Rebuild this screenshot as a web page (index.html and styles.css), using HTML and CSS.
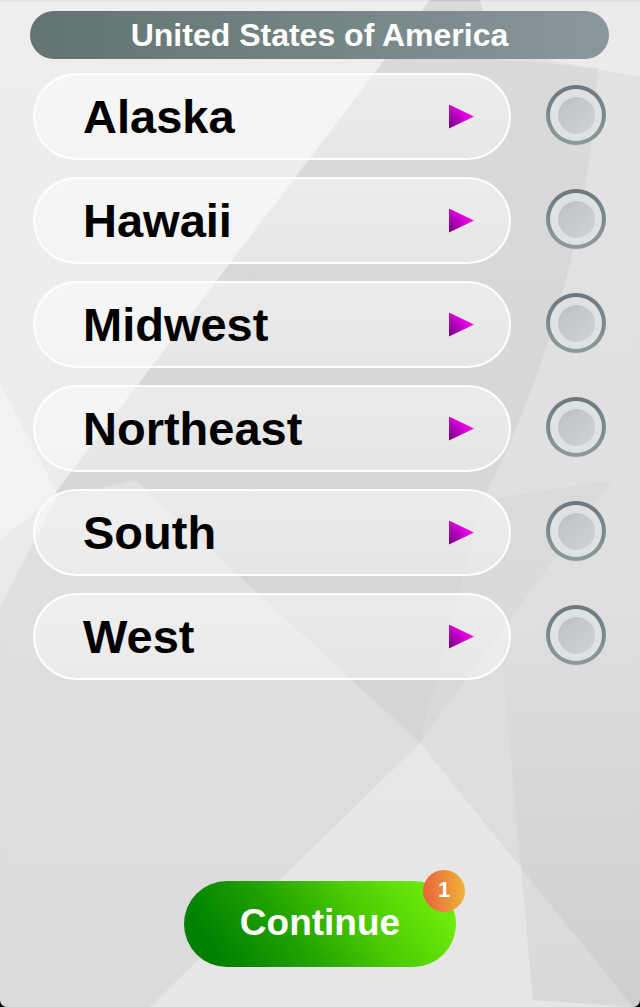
FILE: index.html
```html
<!DOCTYPE html>
<html>
<head>
<meta charset="utf-8">
<title>United States of America</title>
<link rel="stylesheet" href="styles.css">
</head>
<body>
<div class="screen">
  <svg class="backdrop" viewBox="0 0 640 1007" preserveAspectRatio="none" aria-hidden="true">
    <defs>
      <linearGradient id="shade" x1="0" y1="0" x2="0" y2="1">
        <stop offset="0" stop-color="#000" stop-opacity="0"/>
        <stop offset="1" stop-color="#000" stop-opacity="0.06"/>
      </linearGradient>
    </defs>
    <polygon points="0,0 430,0 50,500 0,540" fill="#ffffff" fill-opacity="0.4"/>
    <path d="M480,0 L640,0 L640,77 Q580,64 500,60 Z" fill="#ffffff" fill-opacity="0.3"/>
    <path d="M430,0 L480,0 Q490,58 598,68 Q585,300 483,500 L420,743 L135,480 L50,500 Z" fill="#000000" fill-opacity="0.04"/>
    <polygon points="483,500 612,480 420,743" fill="#000000" fill-opacity="0.02"/>
    <polygon points="0,383 58,495 0,607" fill="#ffffff" fill-opacity="0.35"/>
    <polygon points="420,743 633,1007 150,1007" fill="#ffffff" fill-opacity="0.3"/>
    <polygon points="500,640 640,600 640,1007 633,1007 533,1000" fill="url(#shade)"/>
  </svg>
  <div class="content">
    <div class="title">United States of America</div>
    <ul class="regions">
      <li class="region">
        <div class="pill"><span class="name">Alaska</span><span class="arrow"></span></div>
        <span class="radio"><span class="radio-well"><span class="dot"></span></span></span>
      </li>
      <li class="region">
        <div class="pill"><span class="name">Hawaii</span><span class="arrow"></span></div>
        <span class="radio"><span class="radio-well"><span class="dot"></span></span></span>
      </li>
      <li class="region">
        <div class="pill"><span class="name">Midwest</span><span class="arrow"></span></div>
        <span class="radio"><span class="radio-well"><span class="dot"></span></span></span>
      </li>
      <li class="region">
        <div class="pill"><span class="name">Northeast</span><span class="arrow"></span></div>
        <span class="radio"><span class="radio-well"><span class="dot"></span></span></span>
      </li>
      <li class="region">
        <div class="pill"><span class="name">South</span><span class="arrow"></span></div>
        <span class="radio"><span class="radio-well"><span class="dot"></span></span></span>
      </li>
      <li class="region">
        <div class="pill"><span class="name">West</span><span class="arrow"></span></div>
        <span class="radio"><span class="radio-well"><span class="dot"></span></span></span>
      </li>
    </ul>
    <div class="footer">
      <button class="continue">Continue<span class="badge">1</span></button>
    </div>
  </div>
</div>
</body>
</html>
```

FILE: styles.css
```css
html, body {
  margin: 0;
  padding: 0;
  background: #000;
}

.screen {
  position: relative;
  width: 640px;
  height: 1007px;
  overflow: hidden;
  border-radius: 0 0 7px 7px;
  background: linear-gradient(180deg, #e3e3e3 0%, #dfdfdf 60%, #dbdbdb 100%);
  box-shadow: inset 0 2px 2px -1px rgba(0, 0, 0, 0.12);
  font-family: "Liberation Sans", Arial, Helvetica, sans-serif;
}

.backdrop {
  position: absolute;
  inset: 0;
  width: 100%;
  height: 100%;
  z-index: 0;
}

.content {
  position: relative;
  z-index: 1;
  display: flex;
  flex-direction: column;
  height: 100%;
  box-sizing: border-box;
  padding-top: 11px;
}

.title {
  margin: 0 31px 0 30px;
  height: 48px;
  border-radius: 24px;
  background: linear-gradient(90deg, #627371 0%, #748483 50%, #8b979e 100%);
  color: #fff;
  font-weight: bold;
  font-size: 32px;
  line-height: 48px;
  text-align: center;
}

.regions {
  list-style: none;
  margin: 14px 0 0;
  padding: 0;
  display: flex;
  flex-direction: column;
  gap: 17px;
}

.region {
  display: flex;
  align-items: center;
  padding-left: 33px;
  gap: 35px;
}

.pill {
  width: 478px;
  height: 87px;
  box-sizing: border-box;
  border: 2px solid rgba(255, 255, 255, 0.95);
  border-radius: 44px;
  background: linear-gradient(180deg, rgba(255, 255, 255, 0.5) 0%, rgba(255, 255, 255, 0.38) 100%);
  display: flex;
  align-items: center;
  justify-content: space-between;
  padding: 0 35px 0 48px;
}

.name {
  color: #000;
  font-weight: bold;
  font-size: 47px;
  line-height: 1;
}

.arrow {
  width: 25px;
  height: 24px;
  clip-path: polygon(0 0, 100% 50%, 0 100%);
  background: linear-gradient(to top right, #70007a 0%, #c000c8 45%, #f000f0 70%, #ff40ff 100%);
}

.radio {
  width: 60px;
  height: 60px;
  box-sizing: border-box;
  padding: 4px;
  border-radius: 50%;
  background: linear-gradient(180deg, #6b797e 0%, #7c898f 50%, #8d999f 100%);
  margin-top: -3px;
}

.radio-well {
  display: flex;
  align-items: center;
  justify-content: center;
  width: 100%;
  height: 100%;
  border-radius: 50%;
  background: #dfe2e3;
}

.dot {
  width: 37px;
  height: 37px;
  border-radius: 50%;
  background: linear-gradient(135deg, #bcc1c4 0%, #c7cccf 60%, #d2d5d7 100%);
}

.footer {
  margin-top: auto;
  padding-bottom: 40px;
  display: flex;
  justify-content: center;
}

.continue {
  position: relative;
  width: 272px;
  height: 86px;
  border: none;
  border-radius: 43px;
  background: linear-gradient(55deg, #008000 12%, #1fa000 38%, #4ccc02 65%, #6ceb0b 90%);
  color: #fff;
  font-family: "Liberation Sans", Arial, Helvetica, sans-serif;
  font-weight: bold;
  font-size: 37px;
  padding: 0 0 2px;
}

.badge {
  position: absolute;
  top: -11px;
  right: -9px;
  width: 42px;
  height: 42px;
  border-radius: 50%;
  background: linear-gradient(90deg, #e8643a 0%, #eb8a3a 50%, #f0b43a 100%);
  color: #fff;
  font-size: 22px;
  font-weight: bold;
  line-height: 40px;
  text-align: center;
}
```
